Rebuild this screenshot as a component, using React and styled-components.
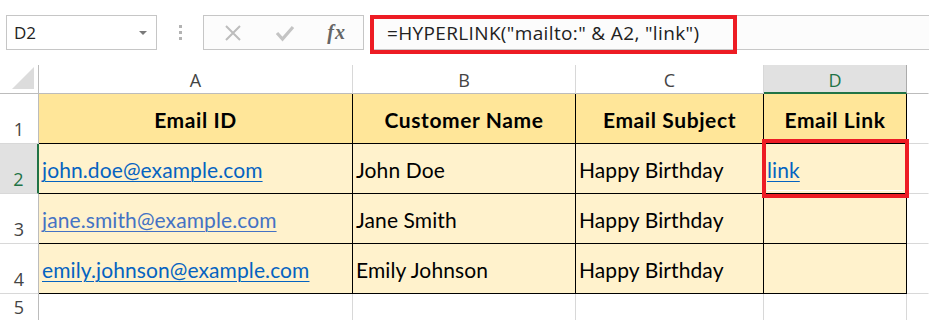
import React from "react";
import styled, { createGlobalStyle } from "styled-components";

const GlobalStyle = createGlobalStyle`
	html, body {
		margin: 0;
		padding: 0;
		background: #ffffff;
		overflow: hidden;
	}
	body {
		font-family: "Lato", "Liberation Sans", sans-serif;
	}
`;

const rows = [
	{ email: "john.doe@example.com", name: "John Doe", subject: "Happy Birthday", link: "link", visited: false },
	{ email: "jane.smith@example.com", name: "Jane Smith", subject: "Happy Birthday", link: "", visited: true },
	{ email: "emily.johnson@example.com", name: "Emily Johnson", subject: "Happy Birthday", link: "", visited: false },
];

const App = () => {
	return (
		<Page>
			<GlobalStyle />
			<Toolbar>
				<NameBox>
					<span>D2</span>
					<Caret />
				</NameBox>
				<Grip>
					<i />
					<i />
					<i />
				</Grip>
				<FxBox>
					<svg width="18" height="18" viewBox="0 0 18 18">
						<path d="M2 2 L16 16 M16 2 L2 16" stroke="#bdbdbd" strokeWidth="2" fill="none" />
					</svg>
					<svg width="20" height="18" viewBox="0 0 20 18">
						<path d="M2 9 L7.5 15 L18 3" stroke="#c4c4c4" strokeWidth="3.2" fill="none" />
					</svg>
					<FxLabel>fx</FxLabel>
				</FxBox>
				<FormulaBar>
					<FormulaText>=HYPERLINK("mailto:" &amp; A2, "link")</FormulaText>
					{/* annotation */}
					<Highlight />
				</FormulaBar>
			</Toolbar>

			<Sheet>
				<Corner>
					<svg width="22" height="22" viewBox="0 0 22 22">
						<polygon points="22,0 22,22 0,22" fill="#dcdcdc" />
					</svg>
				</Corner>
				<ColHead>A</ColHead>
				<ColHead>B</ColHead>
				<ColHead>C</ColHead>
				<ColHead $active>D</ColHead>
				<ColHead $last />

				<RowHead>1</RowHead>
				<Cell $kind="head">Email ID</Cell>
				<Cell $kind="head">Customer Name</Cell>
				<Cell $kind="head">Email Subject</Cell>
				<Cell $kind="head">Email Link</Cell>
				<Cell $kind="empty" $last />

				{rows.map((r, i) => (
					<React.Fragment key={r.email}>
						<RowHead $active={i === 0}>{i + 2}</RowHead>
						<Cell $kind="data">
							<Link $visited={r.visited}>{r.email}</Link>
						</Cell>
						<Cell $kind="data">{r.name}</Cell>
						<Cell $kind="data">{r.subject}</Cell>
						<Cell $kind="data">
							{r.link && <Link>{r.link}</Link>}
							{i === 0 && (
								<>
									<SelectionEdge />
									<CellHighlight />
								</>
							)}
						</Cell>
						<Cell $kind="empty" $last />
					</React.Fragment>
				))}

				<RowHead>5</RowHead>
				<Cell $kind="empty" />
				<Cell $kind="empty" />
				<Cell $kind="empty" />
				<Cell $kind="empty" />
				<Cell $kind="empty" $last />
			</Sheet>
		</Page>
	);
};

export default App;

const Page = styled.div`
	width: 929px;
	height: 320px;
	overflow: hidden;
	background: #ffffff;
`;

const Toolbar = styled.div`
	height: 65px;
	display: flex;
	align-items: flex-start;
	padding: 15px 0 0 6px;
	box-sizing: border-box;
`;

const NameBox = styled.div`
	width: 151px;
	height: 35px;
	box-sizing: border-box;
	border: 1px solid #c6c6c6;
	background: #ffffff;
	display: flex;
	align-items: center;
	justify-content: space-between;
	padding: 0 9px 0 7px;
	font-family: "Open Sans", "Liberation Sans", sans-serif;
	font-size: 17px;
	color: #222;
`;

const Caret = styled.span`
	width: 0;
	height: 0;
	border-left: 4px solid transparent;
	border-right: 4px solid transparent;
	border-top: 4px solid #7a7a7a;
`;

const Grip = styled.div`
	width: 46px;
	height: 35px;
	display: flex;
	flex-direction: column;
	align-items: center;
	justify-content: center;
	gap: 3px;
	i {
		width: 3px;
		height: 3px;
		background: #b3b3b3;
	}
`;

const FxBox = styled.div`
	width: 161px;
	height: 35px;
	box-sizing: border-box;
	border: 1px solid #c6c6c6;
	background: #fcfcfc;
	display: flex;
	align-items: center;
	justify-content: space-between;
	padding: 0 17px 0 20px;
	margin-right: 6px;
`;

const FxLabel = styled.span`
	font-family: "Liberation Serif", "DejaVu Serif", serif;
	font-style: italic;
	font-weight: bold;
	font-size: 20px;
	color: #666;
	letter-spacing: 1px;
`;

const FormulaBar = styled.div`
	position: relative;
	flex: 1;
	height: 35px;
	box-sizing: border-box;
	border-top: 1px solid #c8c8c8;
	border-bottom: 1px solid #c8c8c8;
	background: #fcfcfc;
	display: flex;
	align-items: center;
	padding-left: 17px;
`;

const FormulaText = styled.span`
	font-family: "Open Sans", "Liberation Sans", sans-serif;
	font-size: 19px;
	letter-spacing: 0.35px;
	color: #222;
	white-space: nowrap;
`;

const Highlight = styled.div`
	position: absolute;
	left: 0;
	top: -1px;
	width: 367px;
	height: 39px;
	box-sizing: border-box;
	border: 4px solid #ed1c24;
`;

const Sheet = styled.div`
	display: grid;
	grid-template-columns: 39px 314px 223px 188px 143px 1fr;
	grid-template-rows: 29px repeat(4, 50px) 28px;
`;

const Corner = styled.div`
	box-sizing: border-box;
	border-right: 1px solid #bcbcbc;
	border-bottom: 1px solid #bcbcbc;
	display: flex;
	align-items: flex-end;
	justify-content: flex-end;
	padding: 0 4px 4px 0;
`;

const ColHead = styled.div`
	box-sizing: border-box;
	display: flex;
	align-items: center;
	justify-content: center;
	font-family: "Open Sans", "Liberation Sans", sans-serif;
	font-size: 18px;
	color: ${(p) => (p.$active ? "#217346" : "#444")};
	background: ${(p) => (p.$active ? "#e1e1e1" : "#ffffff")};
	border-right: 1px solid ${(p) => (p.$active ? "#ababab" : p.$last ? "transparent" : "#d8d8d8")};
	border-bottom: ${(p) => (p.$active ? "2px solid #217346" : "1px solid #bcbcbc")};
	padding-top: 2px;
`;

const RowHead = styled.div`
	box-sizing: border-box;
	display: flex;
	align-items: flex-end;
	justify-content: center;
	padding-bottom: 2px;
	line-height: 24px;
	font-family: "Open Sans", "Liberation Sans", sans-serif;
	font-size: 18px;
	color: ${(p) => (p.$active ? "#217346" : "#444")};
	background: ${(p) => (p.$active ? "#e1e1e1" : "#ffffff")};
	border-right: ${(p) => (p.$active ? "2px solid #217346" : "1px solid #bcbcbc")};
	border-bottom: 1px solid #d8d8d8;
`;

const cellBg = {
	head: "#ffe699",
	data: "#fff2cc",
	empty: "#ffffff",
};

const Cell = styled.div`
	position: relative;
	box-sizing: border-box;
	display: flex;
	align-items: center;
	justify-content: ${(p) => (p.$kind === "head" ? "center" : "flex-start")};
	padding: 2px 3px 0 3px;
	background: ${(p) => cellBg[p.$kind]};
	font-family: "Lato", "Liberation Sans", sans-serif;
	font-size: 21px;
	letter-spacing: ${(p) => (p.$kind === "head" ? "0.6px" : "0.1px")};
	font-weight: ${(p) => (p.$kind === "head" ? 700 : 400)};
	color: #000;
	white-space: nowrap;
	border-right: 1px solid
		${(p) => (p.$kind === "empty" ? (p.$last ? "transparent" : "#d8d8d8") : "#000")};
	border-bottom: 1px solid ${(p) => (p.$kind === "empty" ? "#d8d8d8" : "#000")};
`;

const Link = styled.span`
	color: ${(p) => (p.$visited ? "#4472c4" : "#0563c1")};
	text-decoration: underline;
	text-underline-offset: 3px;
	text-decoration-thickness: 1px;
`;

const SelectionEdge = styled.div`
	position: absolute;
	left: 3px;
	right: 3px;
	bottom: 2px;
	height: 1px;
	background: #ffffff;
`;

const CellHighlight = styled.div`
	position: absolute;
	z-index: 2;
	left: -2px;
	top: -5px;
	width: 147px;
	height: 59px;
	box-sizing: border-box;
	border: 4px solid #ed1c24;
`;
